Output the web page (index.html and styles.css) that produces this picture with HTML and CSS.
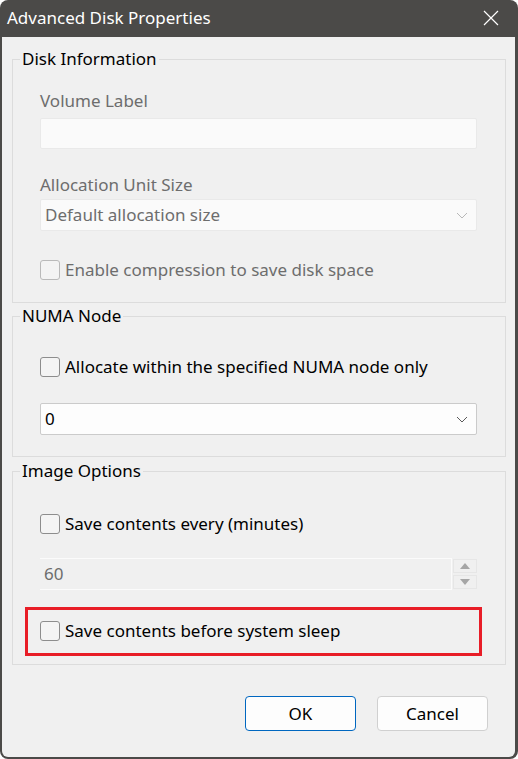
FILE: index.html
```html
<!DOCTYPE html>
<html lang="en">
<head>
<meta charset="utf-8">
<title>Advanced Disk Properties</title>
<link rel="stylesheet" href="styles.css">
</head>
<body>
<div class="window">
  <div class="titlebar">
    <span class="title">Advanced Disk Properties</span>
    <span class="close" aria-label="Close">
      <svg width="16" height="16" viewBox="0 0 16 16"><path d="M1 1 L15 15 M15 1 L1 15" stroke="#ffffff" stroke-width="1.2" fill="none"/></svg>
    </span>
  </div>
  <div class="content">
    <div class="group group-disk">
      <div class="legend">Disk Information</div>
      <div class="label disabled lbl-volume">Volume Label</div>
      <div class="textbox disabled-box"></div>
      <div class="label disabled lbl-alloc">Allocation Unit Size</div>
      <div class="select disabled-box select-alloc">
        <span class="select-text disabled">Default allocation size</span>
        <svg class="chev" width="12" height="7" viewBox="0 0 12 7"><path d="M1 1 L6 6 L11 1" stroke="#b8b8b8" stroke-width="1" fill="none"/></svg>
      </div>
      <div class="check-row row-compress">
        <span class="box box-disabled"></span>
        <span class="disabled">Enable compression to save disk space</span>
      </div>
    </div>

    <div class="group group-numa">
      <div class="legend">NUMA Node</div>
      <div class="check-row row-numa">
        <span class="box"></span>
        <span>Allocate within the specified NUMA node only</span>
      </div>
      <div class="select select-numa">
        <span class="select-text">0</span>
        <svg class="chev" width="12" height="7" viewBox="0 0 12 7"><path d="M1 1 L6 6 L11 1" stroke="#5a5a5a" stroke-width="1" fill="none"/></svg>
      </div>
    </div>

    <div class="group group-image">
      <div class="legend">Image Options</div>
      <div class="check-row row-every">
        <span class="box"></span>
        <span>Save contents every (minutes)</span>
      </div>
      <div class="spin-row">
        <div class="numbox"><span class="disabled">60</span></div>
        <div class="spinner">
          <div class="spin-btn"><svg width="10" height="6" viewBox="0 0 10 6"><path d="M0 6 L5 0 L10 6 Z" fill="#a6a6a6"/></svg></div>
          <div class="spin-btn"><svg width="10" height="6" viewBox="0 0 10 6"><path d="M0 0 L5 6 L10 0 Z" fill="#a6a6a6"/></svg></div>
        </div>
      </div>
      <div class="check-row row-sleep">
        <span class="box"></span>
        <span>Save contents before system sleep</span>
        <span class="highlight"></span>
      </div>
    </div>

    <div class="buttons">
      <button class="btn btn-default">OK</button>
      <button class="btn">Cancel</button>
    </div>
  </div>
</div>
</body>
</html>
```

FILE: styles.css
```css
html, body {
  margin: 0;
  padding: 0;
  background: #ffffff;
}

body {
  font-family: "Noto Sans", "Open Sans", sans-serif;
  font-size: 17px;
  color: #000000;
}

.window {
  width: 518px;
  height: 759px;
  box-sizing: border-box;
  background: #4b4a48;
  border-radius: 8px 8px 8px 8px;
  padding: 0 3px 2px 2px;
  display: flex;
  flex-direction: column;
  overflow: hidden;
}

.titlebar {
  height: 37px;
  flex: none;
  display: flex;
  align-items: center;
  justify-content: space-between;
  padding: 0 16px 0 5px;
  color: #ffffff;
}

.title {
  font-size: 17px;
  line-height: 20px;
  padding-bottom: 1px;
}

.close {
  display: flex;
  width: 16px;
  height: 16px;
  margin-bottom: 1px;
}

.content {
  flex: 1;
  background: #f0f0f0;
  border-radius: 0 0 6px 6px;
  padding: 22px 9px 0 10px;
  display: flex;
  flex-direction: column;
}

.group {
  border: 1px solid #dcdcdc;
  padding: 0 28px 0 27px;
  display: flex;
  flex-direction: column;
}

.legend {
  align-self: flex-start;
  margin: -11px 0 0 -20px;
  padding: 0 2px;
  background: #f0f0f0;
  line-height: 20px;
  height: 20px;
}

.label {
  line-height: 20px;
  height: 20px;
}

.disabled {
  color: #6d6d6d;
}

.lbl-volume { margin-top: 22px; }
.lbl-alloc { margin-top: 26px; }

.textbox {
  margin-top: 7px;
  height: 31px;
  box-sizing: border-box;
}

.disabled-box {
  background: #fafafa;
  border: 1px solid #e9e9e9;
  border-radius: 2px;
}

.select {
  height: 32px;
  box-sizing: border-box;
  display: flex;
  align-items: center;
  justify-content: space-between;
  padding: 0 8px 0 4px;
}

.select-alloc { margin-top: 4px; }

.select-numa {
  margin-top: 26px;
  background: #fdfdfd;
  border: 1px solid #cbcbcb;
  border-radius: 2px;
}

.select-text {
  line-height: 20px;
}

.chev {
  display: block;
}

.check-row {
  position: relative;
  display: flex;
  align-items: center;
  gap: 5px;
  height: 20px;
  line-height: 20px;
}

.box {
  width: 20px;
  height: 20px;
  box-sizing: border-box;
  border: 1px solid #8d8d8d;
  border-radius: 3px;
  background: #f4f4f4;
  flex: none;
}

.box-disabled {
  border-color: #b9b9b9;
  background: #f3f3f3;
}

.row-compress { margin-top: 29px; }
.group-disk { padding-bottom: 22px; }

.group-numa { margin-top: 13px; padding-bottom: 21px; }
.row-numa { margin-top: 31px; }

.group-image { margin-top: 14px; padding-bottom: 23px; }
.row-every { margin-top: 33px; }

.spin-row {
  margin-top: 24px;
  display: flex;
  align-items: center;
  gap: 1px;
  height: 32px;
}

.numbox {
  flex: 1;
  height: 32px;
  box-sizing: border-box;
  border-top: 1px solid #fbfbfb;
  border-bottom: 1px solid #fbfbfb;
  border-right: 1px solid #fbfbfb;
  display: flex;
  align-items: center;
  padding-left: 4px;
  line-height: 20px;
}

.spinner {
  width: 24px;
  display: flex;
  flex-direction: column;
  gap: 2px;
}

.spin-btn {
  height: 14px;
  box-sizing: border-box;
  border: 1px solid #e6e6e6;
  background: #f0f0f0;
  display: flex;
  align-items: center;
  justify-content: center;
}

.spin-btn svg { display: block; }

.row-sleep { margin-top: 31px; }

.highlight {
  position: absolute;
  top: -14px;
  bottom: -15px;
  left: -15px;
  right: -5px;
  border: 3px solid #e81d27;
  pointer-events: none;
}

.buttons {
  margin-top: 31px;
  display: flex;
  justify-content: flex-end;
  gap: 21px;
  padding-right: 18px;
}

.btn {
  width: 111px;
  height: 35px;
  box-sizing: border-box;
  background: #fdfdfd;
  border: 1px solid #d0d0d0;
  border-radius: 4px;
  font-family: "Noto Sans", "Open Sans", sans-serif;
  font-size: 17px;
  color: #000000;
  padding: 0;
}

.btn-default {
  border-color: #0067c0;
}
```
